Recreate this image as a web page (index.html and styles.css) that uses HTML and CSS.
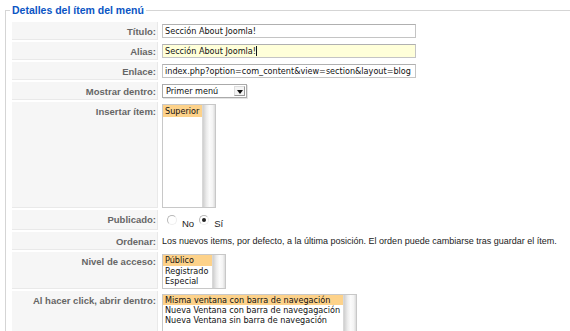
FILE: index.html
```html
<!DOCTYPE html>
<html lang="es">
<head>
    <meta charset="UTF-8">
    <title>Detalles del ítem del menú</title>
    <link rel="stylesheet" href="styles.css">
</head>
<body>
    <fieldset class="details">
        <legend>Detalles del ítem del menú</legend>

        <div class="form-grid">
            <div class="key">Título:</div>
            <div class="value"><div class="text-input">Sección About Joomla!</div></div>

            <div class="key">Alias:</div>
            <div class="value"><div class="text-input focused">Sección About Joomla!<span class="caret"></span></div></div>

            <div class="key">Enlace:</div>
            <div class="value"><div class="text-input">index.php?option=com_content&amp;view=section&amp;layout=blog</div></div>

            <div class="key">Mostrar dentro:</div>
            <div class="value">
                <div class="dropdown">
                    <span>Primer menú</span>
                    <span class="dropdown-btn"></span>
                </div>
            </div>

            <div class="key">Insertar ítem:</div>
            <div class="value">
                <div class="listbox list-parent">
                    <ul>
                        <li class="selected">Superior</li>
                    </ul>
                    <div class="scroll-track"></div>
                </div>
            </div>

            <div class="key">Publicado:</div>
            <div class="value radios">
                <span class="radio"></span><span class="radio-label">No</span>
                <span class="radio checked"></span><span class="radio-label">Sí</span>
            </div>

            <div class="key">Ordenar:</div>
            <div class="value plain">Los nuevos items, por defecto, a la última posición. El orden puede cambiarse tras guardar el ítem.</div>

            <div class="key">Nivel de acceso:</div>
            <div class="value">
                <div class="listbox list-access">
                    <ul>
                        <li class="selected">Público</li>
                        <li>Registrado</li>
                        <li>Especial</li>
                    </ul>
                    <div class="scroll-track"></div>
                </div>
            </div>

            <div class="key">Al hacer click, abrir dentro:</div>
            <div class="value">
                <div class="listbox list-target">
                    <ul>
                        <li class="selected">Misma ventana con barra de navegación</li>
                        <li>Nueva Ventana con barra de navegagación</li>
                        <li>Nueva Ventana sin barra de navegación</li>
                    </ul>
                    <div class="scroll-track"></div>
                </div>
            </div>
        </div>
    </fieldset>
</body>
</html>
```

FILE: styles.css
```css
* {
    box-sizing: border-box;
}

html {
    height: 331px;
    overflow: hidden;
}

body {
    margin: 0;
    padding-top: 3px;
    font-family: 'Liberation Sans', Arial, sans-serif;
    font-size: 9.5px;
    color: #333;
    background: #fff;
}

/* el borde derecho queda fuera de la ventana */
.details {
    margin: 0 0 0 5px;
    padding: 5px 0 0 6px;
    border: 1px solid #d5d5d5;
    border-right: none;
    border-bottom: none;
}

.details legend {
    margin-left: -2px;
    padding: 0 2px;
    font-size: 10.5px;
    line-height: 14px;
    font-weight: bold;
    color: #0b55c4;
}

.form-grid {
    display: grid;
    grid-template-columns: 146px 1fr;
    column-gap: 4px;
    row-gap: 2px;
}

.key {
    background: #f6f6f6;
    border-bottom: 1px solid #e9e9e9;
    border-right: 1px solid #e9e9e9;
    color: #666;
    font-weight: bold;
    text-align: right;
    padding: 4px 1px 0 0;
    line-height: 11px;
    min-height: 18px;
}

.value {
    padding-top: 2px;
}

.text-input {
    width: 254px;
    height: 14px;
    border: 1px solid #c4c4c4;
    border-top-color: #b0b0b0;
    background: #fff;
    padding: 0 2px;
    font-family: 'DejaVu Sans Condensed', 'DejaVu Sans', sans-serif;
    font-size: 9px;
    line-height: 12px;
    color: #111;
    white-space: nowrap;
    overflow: hidden;
}

.text-input.focused {
    background: #ffffd9;
}

.caret {
    display: inline-block;
    width: 1px;
    height: 10px;
    background: #111;
    vertical-align: -2px;
}

.dropdown {
    width: 85px;
    height: 14px;
    border: 1px solid #aaa;
    background: #fff;
    display: flex;
    align-items: center;
    justify-content: space-between;
    padding-left: 3px;
    font-family: 'DejaVu Sans Condensed', 'DejaVu Sans', sans-serif;
    font-size: 9px;
    color: #111;
    box-shadow: 1px 1px 0 #e4e4e4;
}

.dropdown-btn {
    width: 11px;
    height: 10px;
    margin-right: 1px;
    border: 1px solid #999;
    border-top-color: #ddd;
    border-left-color: #ddd;
    background: #f4f4f4;
    position: relative;
}

.dropdown-btn::after {
    content: '';
    position: absolute;
    left: 2px;
    top: 3px;
    border-left: 3px solid transparent;
    border-right: 3px solid transparent;
    border-top: 4px solid #111;
}

.listbox {
    display: flex;
    border: 1px solid #c8c8c8;
    background: #fff;
    font-family: 'DejaVu Sans Condensed', 'DejaVu Sans', sans-serif;
    font-size: 9px;
    line-height: 10px;
    color: #111;
}

.listbox ul {
    list-style: none;
    margin: 0;
    padding: 0;
    flex: 1;
}

.listbox li {
    padding: 0 2px;
    white-space: nowrap;
}

.listbox li.selected {
    background: #fdd28a;
}

.scroll-track {
    width: 13px;
    background: linear-gradient(to right, #cfcfcf 0%, #ececec 30%, #fbfbfb 55%, #f4f4f4 80%, #dcdcdc 100%);
    border-left: 1px solid #d8d8d8;
}

.list-parent {
    width: 54px;
    height: 104px;
}

.list-parent li {
    line-height: 12px;
}

.list-access {
    width: 64px;
    height: 35px;
}

.list-access li {
    line-height: 10.5px;
}

.list-target {
    width: 195px;
    height: 60px;
    margin-top: 1px;
}

.radios {
    display: flex;
    align-items: flex-start;
    padding: 5px 0 0 5px;
    min-height: 20px;
}

.radio {
    width: 10px;
    height: 10px;
    border-radius: 50%;
    border: 1px solid #b8b8b8;
    border-right-color: #eee;
    border-bottom-color: #eee;
    background: #fff;
    position: relative;
}

.radio.checked::after {
    content: '';
    position: absolute;
    left: 2px;
    top: 2px;
    width: 4px;
    height: 4px;
    border-radius: 50%;
    background: #222;
}

.radio-label {
    margin: 4px 5px 0 5px;
    line-height: 10px;
    color: #222;
}

.plain {
    padding-top: 3px;
    font-size: 9px;
    line-height: 12px;
    white-space: nowrap;
    color: #222;
}
```
